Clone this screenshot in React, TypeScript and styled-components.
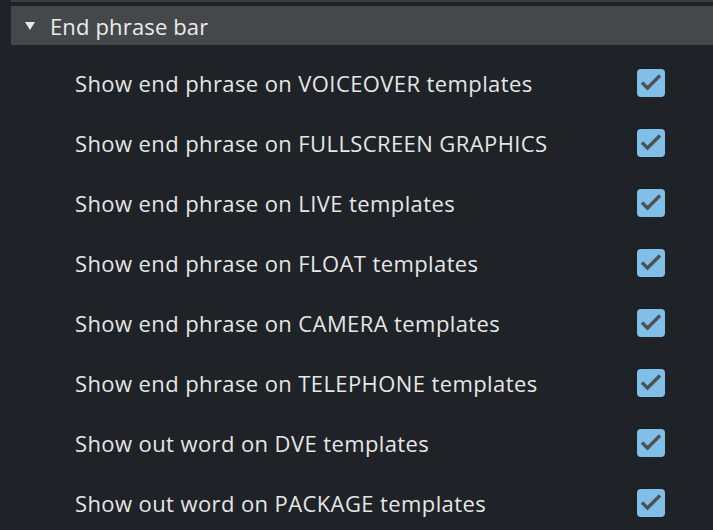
import React from 'react';
import styled, { createGlobalStyle } from 'styled-components';

const GlobalStyle = createGlobalStyle`
  html, body {
    margin: 0;
    padding: 0;
    background: #1f2226;
  }
`;

const options = [
  'Show end phrase on VOICEOVER templates',
  'Show end phrase on FULLSCREEN GRAPHICS',
  'Show end phrase on LIVE templates',
  'Show end phrase on FLOAT templates',
  'Show end phrase on CAMERA templates',
  'Show end phrase on TELEPHONE templates',
  'Show out word on DVE templates',
  'Show out word on PACKAGE templates',
];

const App = () => {
  return (
    <>
      <GlobalStyle />
      <Page>
        <TopStrip />
        <Section>
          <Header>
            <Caret viewBox="0 0 10 8">
              <path d="M0 0 H10 L5 8 Z" fill="#e8e8e8" />
            </Caret>
            <HeaderTitle>End phrase bar</HeaderTitle>
          </Header>
          <List>
            {options.map((label) => (
              <Row key={label}>
                <Label>{label}</Label>
                <Checkbox>
                  <svg width="28" height="28" viewBox="0 0 28 28">
                    <path
                      d="M5 13.5 L10.5 19 L23 6.5"
                      fill="none"
                      stroke="#4d5156"
                      strokeWidth="3.4"
                    />
                  </svg>
                </Checkbox>
              </Row>
            ))}
          </List>
        </Section>
      </Page>
    </>
  );
};

export default App;

const Page = styled.div`
  width: 713px;
  height: 530px;
  overflow: hidden;
  background: #1f2226;
  padding-left: 11px;
  box-sizing: border-box;
  font-family: 'Open Sans', 'Noto Sans', sans-serif;
`;

const TopStrip = styled.div`
  height: 2px;
  background: #3c3f42;
  margin-bottom: 4px;
`;

const Section = styled.div`
  display: flex;
  flex-direction: column;
`;

const Header = styled.div`
  height: 39px;
  background: #45484b;
  display: flex;
  align-items: center;
  padding-left: 14px;
  gap: 15px;
`;

const Caret = styled.svg`
  width: 10px;
  height: 8px;
`;

const HeaderTitle = styled.span`
  color: #ececec;
  font-size: 22px;
  letter-spacing: 0.15px;
`;

const List = styled.div`
  display: flex;
  flex-direction: column;
  padding-top: 8px;
`;

const Row = styled.div`
  height: 60px;
  display: flex;
  align-items: center;
  justify-content: space-between;
  padding-left: 64px;
  padding-right: 48px;
`;

const Label = styled.span`
  color: #e6e6e6;
  font-size: 22px;
  letter-spacing: 0.4px;
`;

const Checkbox = styled.div`
  width: 28px;
  height: 28px;
  border-radius: 4px;
  background: #7fbfe8;
  display: flex;
  align-items: center;
  justify-content: center;
`;
